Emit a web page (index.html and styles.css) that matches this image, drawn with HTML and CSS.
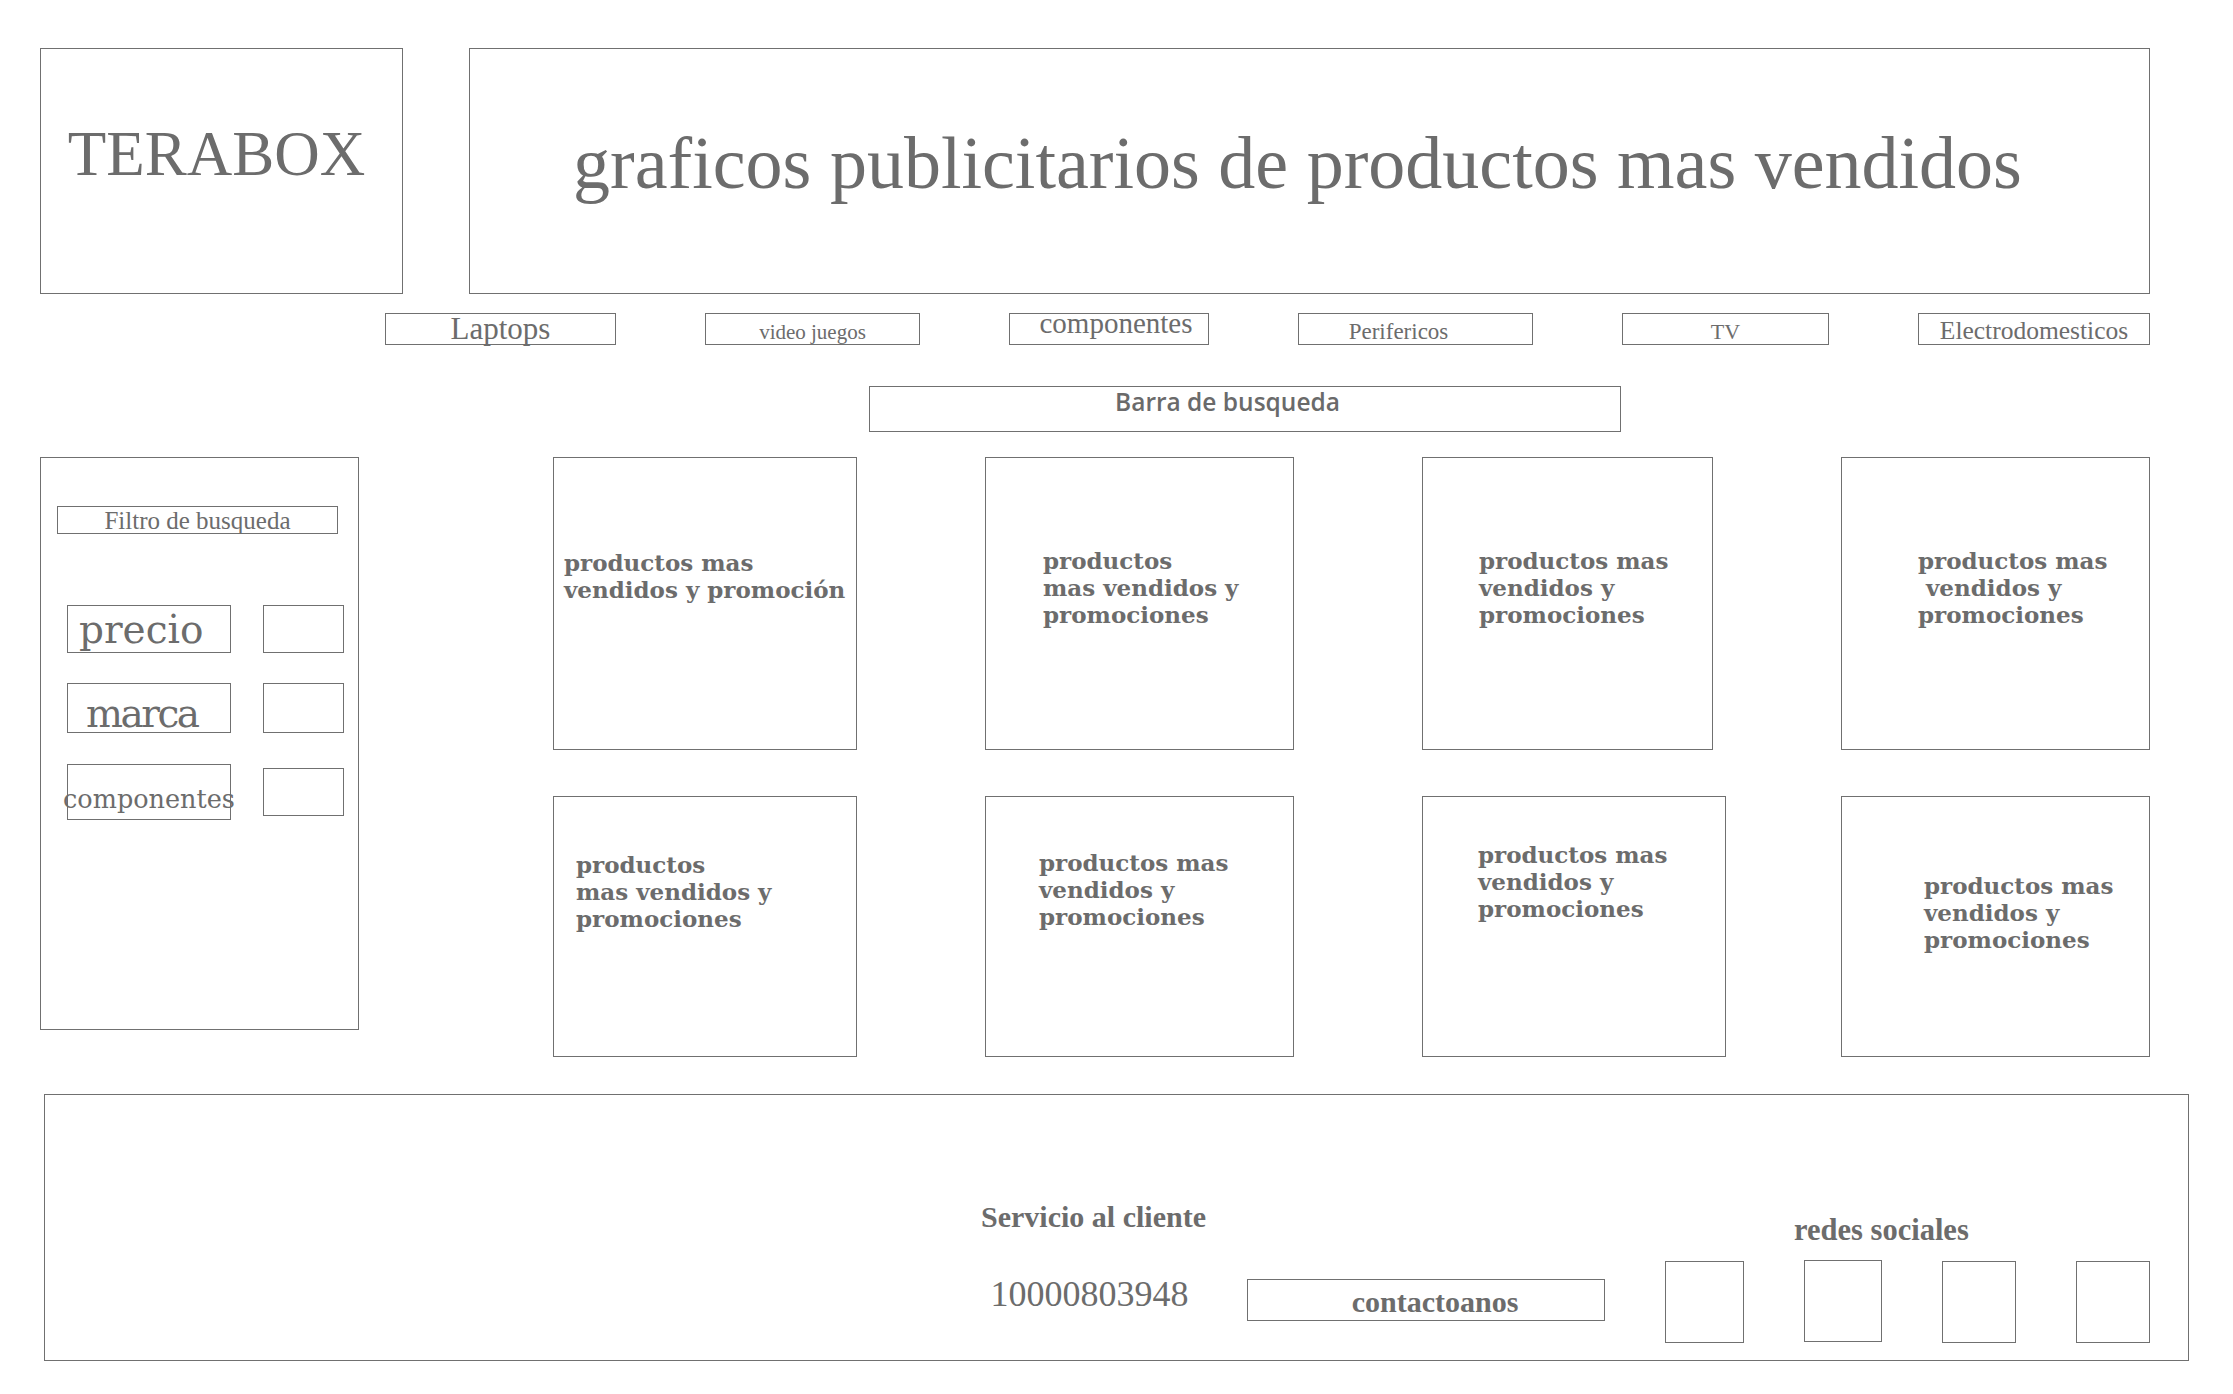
FILE: index.html
```html
<!DOCTYPE html>
<html lang="es">
<head>
<meta charset="utf-8">
<title>TERABOX</title>
<link rel="stylesheet" href="styles.css">
</head>
<body>
<div class="page">
  <header class="top">
    <div class="logo">TERABOX</div>
    <div class="banner">graficos publicitarios de productos mas vendidos</div>
  </header>

  <nav class="nav">
    <div class="nav-item nav-laptops">Laptops</div>
    <div class="nav-item nav-games">video juegos</div>
    <div class="nav-item nav-comp">componentes</div>
    <div class="nav-item nav-peri">Perifericos</div>
    <div class="nav-item nav-tv">TV</div>
    <div class="nav-item nav-electro">Electrodomesticos</div>
  </nav>

  <div class="search">Barra de busqueda</div>

  <main class="main">
    <aside class="filters">
      <div class="filter-title">Filtro de busqueda</div>
      <div class="filter-rows">
        <div class="filter-row">
          <div class="filter-label label-precio">precio</div>
          <div class="filter-box"></div>
        </div>
        <div class="filter-row row-marca">
          <div class="filter-label label-marca">marca</div>
          <div class="filter-box"></div>
        </div>
        <div class="filter-row row-comp">
          <div class="filter-label label-comp">componentes</div>
          <div class="filter-box box-comp"></div>
        </div>
      </div>
    </aside>

    <section class="grid">
      <div class="card card-1">productos mas<br>vendidos y promoción</div>
      <div class="card card-2">productos<br>mas vendidos y<br>promociones</div>
      <div class="card card-3">productos mas<br>vendidos y<br>promociones</div>
      <div class="card card-4">productos mas<br>&nbsp;vendidos y<br>promociones</div>
      <div class="card card-5">productos<br>mas vendidos y<br>promociones</div>
      <div class="card card-6">productos mas<br>vendidos y<br>promociones</div>
      <div class="card card-7">productos mas<br>vendidos y<br>promociones</div>
      <div class="card card-8">productos mas<br>vendidos y<br>promociones</div>
    </section>
  </main>

  <footer class="footer">
    <div class="service">
      <div class="service-title">Servicio al cliente</div>
      <div class="service-phone">10000803948</div>
    </div>
    <div class="contact">contactoanos</div>
    <div class="social">
      <div class="social-title">redes sociales</div>
      <div class="social-boxes">
        <div class="social-box sb-1"></div>
        <div class="social-box sb-2"></div>
        <div class="social-box sb-3"></div>
        <div class="social-box sb-4"></div>
      </div>
    </div>
  </footer>
</div>
</body>
</html>
```

FILE: styles.css
```css
* {
  box-sizing: border-box;
}

body {
  margin: 0;
  background: #ffffff;
  color: #6c6c6c;
  font-family: "Liberation Serif", "Times New Roman", serif;
}

.page {
  padding: 48px 0 0 40px;
}

/* ---------- header ---------- */
.top {
  display: flex;
  gap: 66px;
}

.logo {
  width: 363px;
  height: 246px;
  border: 1px solid #707070;
  padding: 74px 10px 0 0;
  font-size: 63px;
  line-height: 1;
  text-align: center;
  white-space: nowrap;
}

.banner {
  width: 1681px;
  height: 246px;
  border: 1px solid #707070;
  display: flex;
  align-items: center;
  justify-content: center;
  padding: 0 24px 17px 0;
  font-size: 74px;
  line-height: 1;
  white-space: nowrap;
}

/* ---------- nav ---------- */
.nav {
  display: flex;
  gap: 89px;
  margin: 19px 0 0 345px;
}

.nav-item {
  height: 32px;
  border: 1px solid #707070;
  display: flex;
  align-items: flex-end;
  justify-content: center;
  line-height: 1;
  padding-bottom: 1px;
  white-space: nowrap;
}

.nav-laptops { width: 231px; font-size: 31px; padding-bottom: 0; }
.nav-games { width: 215px; font-size: 21px; }
.nav-comp { width: 200px; font-size: 29px; padding-bottom: 6px; padding-left: 14px; }
.nav-peri { width: 235px; font-size: 23px; padding-right: 34px; }
.nav-tv { width: 207px; font-size: 22px; }
.nav-electro { width: 232px; font-size: 25.5px; }

/* ---------- search ---------- */
.search {
  width: 752px;
  height: 46px;
  margin: 41px 0 0 829px;
  border: 1px solid #707070;
  padding: 3px 35px 0 0;
  text-align: center;
  font-family: "Open Sans", "Liberation Sans", sans-serif;
  font-weight: 600;
  font-size: 24.5px;
  line-height: 1;
  color: #6a6a6a;
  white-space: nowrap;
}

/* ---------- main ---------- */
.main {
  display: flex;
  align-items: flex-start;
  margin-top: 25px;
}

.filters {
  flex-shrink: 0;
  width: 319px;
  height: 573px;
  border: 1px solid #707070;
  padding: 48px 0 0 16px;
}

.filter-title {
  width: 281px;
  height: 28px;
  border: 1px solid #707070;
  display: flex;
  align-items: flex-end;
  justify-content: center;
  font-size: 25px;
  line-height: 1;
  white-space: nowrap;
}

.filter-rows {
  margin-top: 71px;
  padding-left: 10px;
}

.filter-row {
  display: flex;
  align-items: flex-start;
  gap: 32px;
  height: 48px;
}

.row-marca {
  margin-top: 30px;
  height: 50px;
}

.row-comp {
  margin-top: 31px;
  height: 56px;
}

.filter-label {
  width: 164px;
  height: 100%;
  border: 1px solid #707070;
  display: flex;
  line-height: 1;
  white-space: nowrap;
  font-family: "DejaVu Serif", "Liberation Serif", serif;
}

.label-precio {
  font-size: 39px;
  padding: 4px 0 0 11px;
}

.label-marca {
  font-size: 39px;
  letter-spacing: -2.5px;
  padding: 10px 0 0 18px;
}

.label-comp {
  font-size: 25.5px;
  padding-top: 22px;
  justify-content: center;
}

.filter-box {
  width: 81px;
  height: 100%;
  border: 1px solid #707070;
}

.box-comp {
  height: 48px;
  margin-top: 4px;
}

/* ---------- product grid ---------- */
.grid {
  margin-left: 194px;
  display: grid;
  grid-template-columns: 304px 309px 291px 309px;
  grid-template-rows: 293px 261px;
  column-gap: 128px;
  row-gap: 46px;
}

.card {
  border: 1px solid #707070;
  font-family: "DejaVu Serif", "Liberation Serif", serif;
  font-weight: bold;
  font-size: 23px;
  line-height: 27px;
  letter-spacing: 0;
  white-space: nowrap;
}

.card-1 { padding: 91px 0 0 10px; }
.card-2 { padding: 89px 0 0 57px; }
.card-3 { padding: 89px 0 0 56px; }
.card-4 { padding: 89px 0 0 76px; }
.card-5 { padding: 54px 0 0 22px; }
.card-6 { padding: 52px 0 0 53px; }
.card-7 { padding: 44px 0 0 55px; width: 304px; justify-self: start; }
.card-8 { padding: 75px 0 0 82px; }

/* ---------- footer ---------- */
.footer {
  display: flex;
  align-items: flex-start;
  width: 2145px;
  height: 267px;
  margin: 37px 0 0 4px;
  border: 1px solid #707070;
  padding-left: 932px;
}

.service {
  flex-shrink: 0;
  width: 233px;
  display: flex;
  flex-direction: column;
  align-items: center;
}

.service-title {
  margin-top: 107px;
  font-weight: bold;
  font-size: 30px;
  line-height: 1;
  white-space: nowrap;
}

.service-phone {
  margin-top: 44px;
  font-size: 36px;
  line-height: 1;
  white-space: nowrap;
  padding-right: 8px;
}

.contact {
  flex-shrink: 0;
  width: 358px;
  height: 42px;
  margin: 184px 0 0 37px;
  border: 1px solid #707070;
  padding: 7px 0 0 18px;
  text-align: center;
  font-weight: bold;
  font-size: 30px;
  line-height: 1;
  white-space: nowrap;
}

.social {
  flex-shrink: 0;
  margin-left: 60px;
  display: flex;
  flex-direction: column;
}

.social-title {
  margin-top: 120px;
  padding-left: 129px;
  font-weight: bold;
  font-size: 30.5px;
  line-height: 1;
  white-space: nowrap;
}

.social-boxes {
  display: flex;
  align-items: flex-start;
  gap: 60px;
  margin-top: 15px;
}

.social-box {
  height: 82px;
  border: 1px solid #707070;
}

.sb-1 { width: 79px; }
.sb-2 { width: 78px; margin-top: -1px; }
.sb-3 { width: 74px; }
.sb-4 { width: 74px; }
```
